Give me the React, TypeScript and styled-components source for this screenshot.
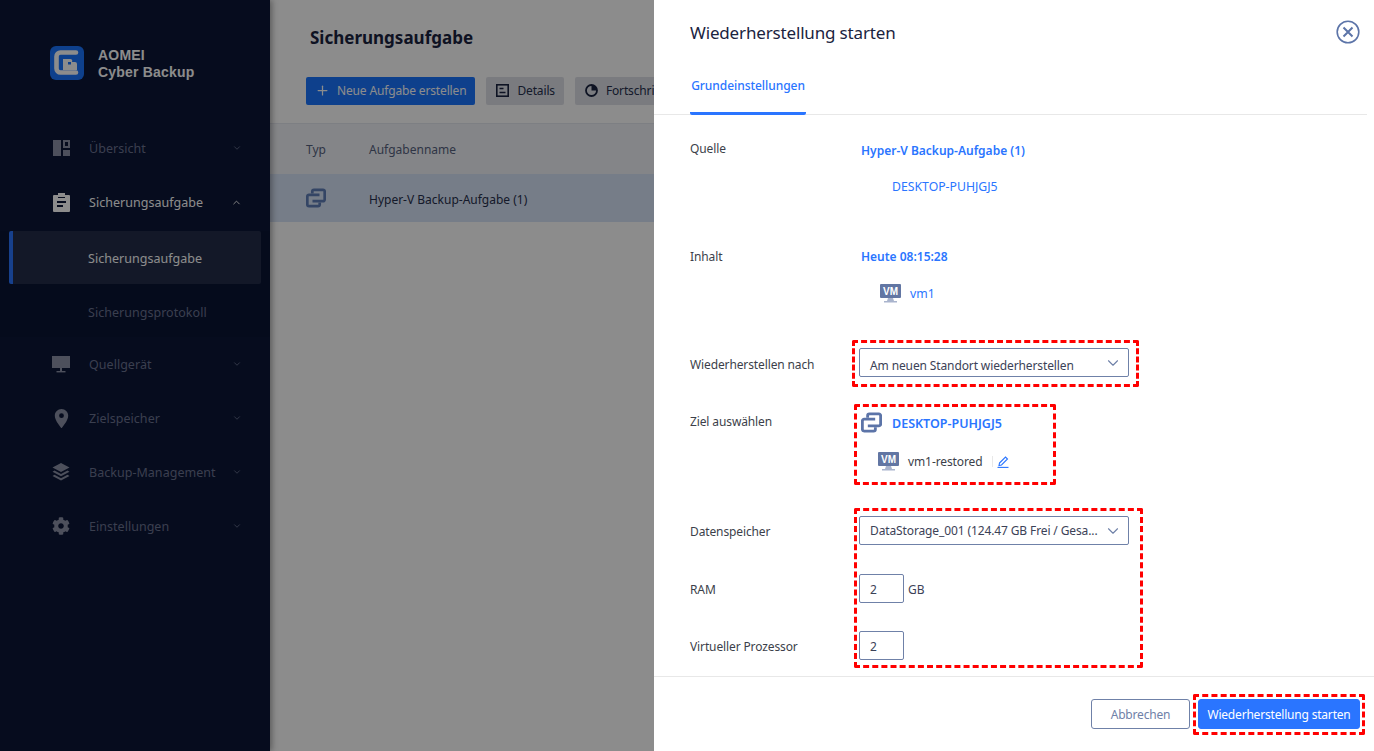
import React from 'react'
import styled, { createGlobalStyle } from 'styled-components'
import { ChevronDown, ChevronUp, Plus } from 'lucide-react'
import { FaCog } from 'react-icons/fa'
import { MdLocationOn } from 'react-icons/md'

const GlobalStyle = createGlobalStyle`
  html, body {
    margin: 0;
    height: 100%;
    overflow: hidden;
    background: #fff;
  }
  * {
    box-sizing: border-box;
  }
  body {
    font-family: "Noto Sans", sans-serif;
  }
`

const Page = styled.div`
  position: relative;
  display: flex;
  width: 1374px;
  height: 751px;
  overflow: hidden;
`

const Sidebar = styled.aside`
  width: 270px;
  flex-shrink: 0;
  background: #0b1637;
  box-shadow: 2px 0 6px rgba(0, 0, 0, 0.35);
  padding-top: 46px;
  position: relative;
`

const Brand = styled.div`
  display: flex;
  align-items: center;
  gap: 14px;
  height: 34px;
  margin: 0 0 41px 50px;
`

const BrandText = styled.div`
  padding-top: 2px;
  font-family: "Liberation Sans", sans-serif;
  font-weight: 700;
  font-size: 14px;
  line-height: 17px;
  letter-spacing: 0.2px;
  color: #fff;
`

const NavItem = styled.div<{ $open?: boolean }>`
  display: flex;
  align-items: center;
  height: 54px;
  padding: 0 28px 0 51px;
  font-size: 12.5px;
  letter-spacing: 0.03px;
  color: ${(p) => (p.$open ? '#ffffff' : '#6b7391')};
  svg {
    flex-shrink: 0;
  }
`

const NavIcon = styled.span<{ $open?: boolean }>`
  width: 20px;
  height: 20px;
  margin-right: 18px;
  display: flex;
  align-items: center;
  justify-content: center;
  color: ${(p) => (p.$open ? '#ffffff' : '#8d93a8')};
`

const NavLabel = styled.span`
  flex: 1;
`

const SubMenu = styled.div`
  display: flex;
  flex-direction: column;
  gap: 1px;
  height: 106px;
  margin-top: 2px;
  background: #0a1434;
`

const SubItem = styled.div<{ $active?: boolean }>`
  display: flex;
  align-items: center;
  flex-shrink: 0;
  height: 53px;
  margin: 0 9px;
  padding-top: 2px;
  font-size: 12.5px;
  letter-spacing: 0.03px;
  border-radius: 2px;
  color: ${(p) => (p.$active ? '#ffffff' : '#6b7391')};
  background: ${(p) => (p.$active ? '#232d4a' : 'transparent')};
  border-left: ${(p) => (p.$active ? '4px solid #2a75ff' : '0')};
  padding-left: ${(p) => (p.$active ? '75px' : '79px')};
`

const Main = styled.main`
  flex: 1;
  min-width: 0;
  background: #ffffff;
  padding-top: 26px;
`

const PageTitle = styled.h1`
  margin: 0 0 27px 40px;
  font-size: 17px;
  line-height: 24px;
  font-weight: 700;
  color: #1a2340;
`

const Toolbar = styled.div`
  display: flex;
  gap: 11px;
  padding-left: 36px;
  margin-bottom: 18px;
`

const ToolButton = styled.div<{ $primary?: boolean }>`
  display: flex;
  align-items: center;
  gap: ${(p) => (p.$primary ? '7px' : '8px')};
  height: 28px;
  padding: 0 9px 2px ${(p) => (p.$primary ? '9px' : '10px')};
  border-radius: 2px;
  white-space: nowrap;
  font-size: 12px;
  letter-spacing: -0.15px;
  color: ${(p) => (p.$primary ? '#ffffff' : '#27304d')};
  background: ${(p) => (p.$primary ? '#1a76ff' : '#dee1e8')};
`

const TableHead = styled.div`
  display: flex;
  align-items: center;
  height: 51px;
  padding-left: 36px;
  background: #f1f3f7;
  border-top: 1px solid #e4e7ee;
  font-size: 12px;
  color: #56627f;
`

const TableRow = styled.div`
  display: flex;
  align-items: center;
  height: 48px;
  padding-left: 36px;
  background: #d7e3f7;
  font-size: 12px;
  color: #27304d;
`

const TypeCell = styled.div`
  width: 63px;
  display: flex;
  align-items: center;
`

const NameCell = styled.div`
  padding-top: 2px;
`

const Backdrop = styled.div`
  position: absolute;
  inset: 0;
  background: rgba(0, 0, 0, 0.45);
`

const Drawer = styled.section`
  position: absolute;
  top: 0;
  right: 0;
  bottom: 0;
  width: 720px;
  background: #ffffff;
  display: flex;
  flex-direction: column;
`

const DrawerHeader = styled.header`
  display: flex;
  align-items: center;
  justify-content: space-between;
  height: 66px;
  padding: 0 14px 2px 36px;
  font-size: 17px;
  letter-spacing: -0.16px;
  color: #1a2340;
`

const Tabs = styled.div`
  height: 49px;
  margin-right: 7px;
  padding-left: 36px;
  border-bottom: 1px solid #e8e8e8;
`

const Tab = styled.div`
  display: inline-flex;
  justify-content: center;
  align-items: center;
  width: 116px;
  height: 49px;
  padding-bottom: 8px;
  font-size: 12px;
  letter-spacing: -0.05px;
  font-weight: 500;
  color: #2a75ff;
  border-bottom: 3px solid #2a75ff;
  border-radius: 0 0 2px 2px;
`

const DrawerBody = styled.div`
  flex: 1;
  min-height: 0;
  overflow: hidden;
  padding: 24px 0 0 36px;
`

const Row = styled.div<{ $gap: number }>`
  display: grid;
  grid-template-columns: 169px 1fr;
  margin-bottom: ${(p) => p.$gap}px;
`

const Label = styled.div<{ $line?: number }>`
  font-size: 12px;
  letter-spacing: -0.12px;
  line-height: ${(p) => p.$line ?? 20}px;
  color: #3c3f4a;
`

const Values = styled.div<{ $top: number }>`
  padding: ${(p) => p.$top}px 0 0 2px;
`

const SourceLink = styled.div`
  font-size: 12px;
  line-height: 20px;
  font-weight: 600;
  color: #2a75ff;
`

const TargetName = styled(SourceLink)`
  padding-top: 3px;
  font-size: 12.5px;
`

const SubLink = styled.div<{ $indent: number; $top: number }>`
  display: flex;
  align-items: center;
  gap: 9px;
  height: 20px;
  margin: ${(p) => p.$top}px 0 0 ${(p) => p.$indent}px;
  font-size: 12.25px;
  color: #2a75ff;
`

const TargetHead = styled.div`
  display: flex;
  align-items: center;
  gap: 10px;
  height: 20px;
`

const VmRow = styled.div`
  display: flex;
  align-items: center;
  height: 20px;
  gap: 9px;
  margin: 19px 0 0 17px;
  font-size: 12px;
  letter-spacing: -0.1px;
  color: #3c3f4a;
`

const EditMark = styled.span`
  display: flex;
  align-items: center;
  padding-left: 4px;
  border-left: 1px solid #e8e8e8;
  height: 11px;
`

const Select = styled.div`
  display: flex;
  align-items: center;
  justify-content: space-between;
  width: 270px;
  height: 29px;
  padding: 0 6px 0 10px;
  border: 1px solid #6f81a8;
  border-radius: 2px;
  font-size: 12px;
  letter-spacing: -0.12px;
  color: #3c4257;
  white-space: nowrap;
  svg {
    flex-shrink: 0;
  }
`

const SelectText = styled.span<{ $drop: number }>`
  padding-top: ${(p) => p.$drop}px;
`

const NumberRow = styled.div`
  display: flex;
  align-items: center;
  align-self: start;
  gap: 4px;
  font-size: 12px;
  color: #3c4257;
`

const NumberBox = styled.div`
  width: 45px;
  height: 29px;
  padding: 2px 0 0 10px;
  display: flex;
  align-items: center;
  border: 1px solid #6f81a8;
  border-radius: 2px;
  font-size: 12px;
  color: #3c4257;
`

const Unit = styled.span`
  padding-top: 2px;
`

const DrawerFooter = styled.footer`
  display: flex;
  justify-content: flex-end;
  gap: 8px;
  height: 75px;
  padding: 22px 14px 0 0;
  border-top: 1px solid #e8e8e8;
`

const FooterButton = styled.div<{ $primary?: boolean }>`
  display: flex;
  align-items: center;
  justify-content: center;
  height: 30px;
  width: ${(p) => (p.$primary ? '162px' : '99px')};
  padding-top: 1px;
  border-radius: 3px;
  font-size: 12px;
  letter-spacing: -0.19px;
  color: ${(p) => (p.$primary ? '#ffffff' : '#6f81a8')};
  background: ${(p) => (p.$primary ? '#2a75ff' : '#ffffff')};
  border: 1px solid ${(p) => (p.$primary ? '#2a75ff' : '#6f81a8')};
`

const Marker = styled.div<{ $x: number; $y: number; $w: number; $h: number }>`
  position: absolute;
  left: ${(p) => p.$x}px;
  top: ${(p) => p.$y}px;
  width: ${(p) => p.$w}px;
  height: ${(p) => p.$h}px;
  border: 3px dashed #ff0000;
  border-radius: 2px;
  pointer-events: none;
`

function BrandLogo () {
  return (
    <svg width='34' height='34' viewBox='0 0 34 34'>
      <rect width='34' height='34' rx='6' fill='#1a76ff' />
      <path d='M26 6.500H10.500a4 4 0 0 0-4 4v12a4 4 0 0 0 4 4H26' fill='none' stroke='#fff' strokeWidth='4.600' strokeLinecap='round' />
      <path d='M13 13h7a2 2 0 0 1 2 3h3a2 2 0 0 1 2 2v6H13z' fill='#fff' />
      <path d='M18 16h3v2.500h-3z' fill='#1a76ff' />
    </svg>
  )
}

function OverviewIcon () {
  return (
    <svg width='17' height='17' viewBox='0 0 17 17' fill='currentColor'>
      <rect x='0' y='0' width='8' height='16' />
      <path fillRule='evenodd' d='M10 0h7v8h-7zM12 2v4h3V2z' />
      <rect x='10' y='10' width='7' height='6' />
    </svg>
  )
}

function ClipboardIcon () {
  return (
    <svg width='17' height='19' viewBox='0 0 17 19' fill='currentColor'>
      <path
        fillRule='evenodd'
        d='M1 2h4V0h7v2h4a1 1 0 0 1 1 1v15a1 1 0 0 1-1 1H1a1 1 0 0 1-1-1V3a1 1 0 0 1 1-1zM4 8v2h9V8zM4 12v2h6v-2zM5 4v1h7V4z'
      />
    </svg>
  )
}

function MonitorIcon () {
  return (
    <svg width='18' height='17' viewBox='0 0 18 17' fill='currentColor'>
      <rect x='0' y='0' width='18' height='12' />
      <rect x='8' y='12' width='2' height='3' />
      <rect x='4.500' y='15' width='9' height='1.400' />
    </svg>
  )
}

function LayersIcon () {
  return (
    <svg width='18' height='18' viewBox='0 0 18 18' fill='currentColor'>
      <path d='M9 0l8.500 4.500L9 9 .5 4.500z' />
      <path d='M2.500 7.500L.5 8.700 9 13.200l8.500-4.500-2-1.200L9 11z' />
      <path d='M2.500 11.700L.5 12.900 9 17.400l8.500-4.500-2-1.200L9 15.200z' />
    </svg>
  )
}

function SyncIcon ({ size, color }: { size: number; color: string }) {
  return (
    <svg width={size} height={size} viewBox='0 0 20 19' fill='none' stroke={color} strokeWidth='2.700'>
      <path d='M6.300 5V3a1.700 1.700 0 0 1 1.700-1.700h9A1.700 1.700 0 0 1 18.700 3v8a1.700 1.700 0 0 1-1.700 1.700H6.500' />
      <path d='M13.700 14v2a1.700 1.700 0 0 1-1.700 1.700H3A1.700 1.700 0 0 1 1.300 16V8A1.700 1.700 0 0 1 3 6.300h10.500' />
    </svg>
  )
}

function VmIcon () {
  return (
    <svg width='21' height='19' viewBox='0 0 21 19'>
      <rect x='0' y='0' width='21' height='14' rx='1' fill='#6276a3' />
      <text x='10.500' y='11' textAnchor='middle' fontSize='10' fontWeight='700' fontFamily='"Liberation Sans", sans-serif' fill='#fff'>VM</text>
      <path d='M8 14h5l1 3H7z' fill='#a9b4cd' />
      <rect x='4' y='17' width='13' height='1.500' fill='#a9b4cd' />
    </svg>
  )
}

function CloseIcon () {
  return (
    <svg width='24' height='24' viewBox='0 0 24 24' fill='none' stroke='#5c74a8'>
      <circle cx='12' cy='12' r='10.800' strokeWidth='1.600' />
      <path d='M7.500 7.500l9 9M16.500 7.500l-9 9' strokeWidth='2' />
    </svg>
  )
}

function PenIcon () {
  return (
    <svg width='12' height='13' viewBox='0 0 12 13' fill='none' stroke='#2a75ff' strokeWidth='1.100'>
      <path d='M2.500 8L8.500 2l2 2-6 6-2.500.5z' />
      <path d='M.5 12.400h11' />
    </svg>
  )
}

function DetailsIcon () {
  return (
    <svg width='13' height='13' viewBox='0 0 13 13' fill='none' stroke='#1a2340' strokeWidth='1.600'>
      <rect x='.8' y='.8' width='11.400' height='11.400' />
      <path d='M3.500 4.500h4M3.500 8.500h6' />
    </svg>
  )
}

function ProgressIcon () {
  return (
    <svg width='13' height='13' viewBox='0 0 13 13'>
      <circle cx='6.500' cy='6.500' r='5.500' fill='none' stroke='#1a2340' strokeWidth='1.800' />
      <path d='M6.500 6.500V1a5.500 5.500 0 0 1 5.500 5.500z' fill='#1a2340' />
    </svg>
  )
}

const navBefore = [{ label: 'Übersicht', icon: <OverviewIcon /> }]

const navAfter = [
  { label: 'Quellgerät', icon: <MonitorIcon /> },
  { label: 'Zielspeicher', icon: <MdLocationOn size={23} /> },
  { label: 'Backup-Management', icon: <LayersIcon /> },
  { label: 'Einstellungen', icon: <FaCog size={18} /> },
]

const markers = [
  { x: 852, y: 340, w: 287, h: 47 },
  { x: 854, y: 404, w: 202, h: 81 },
  { x: 854, y: 508, w: 289, h: 160 },
  { x: 1193, y: 694, w: 172, h: 41 },
]

export default function App () {
  return (
    <Page>
      <GlobalStyle />
      <Sidebar>
        <Brand>
          <BrandLogo />
          <BrandText>AOMEI<br />Cyber Backup</BrandText>
        </Brand>
        {navBefore.map((item) => (
          <NavItem key={item.label}>
            <NavIcon>{item.icon}</NavIcon>
            <NavLabel>{item.label}</NavLabel>
            <ChevronDown size={10} />
          </NavItem>
        ))}
        <NavItem $open>
          <NavIcon $open><ClipboardIcon /></NavIcon>
          <NavLabel>Sicherungsaufgabe</NavLabel>
          <ChevronUp size={11} />
        </NavItem>
        <SubMenu>
          <SubItem $active>Sicherungsaufgabe</SubItem>
          <SubItem>Sicherungsprotokoll</SubItem>
        </SubMenu>
        {navAfter.map((item) => (
          <NavItem key={item.label}>
            <NavIcon>{item.icon}</NavIcon>
            <NavLabel>{item.label}</NavLabel>
            <ChevronDown size={10} />
          </NavItem>
        ))}
      </Sidebar>

      <Main>
        <PageTitle>Sicherungsaufgabe</PageTitle>
        <Toolbar>
          <ToolButton $primary><Plus size={15} />Neue Aufgabe erstellen</ToolButton>
          <ToolButton><DetailsIcon />Details</ToolButton>
          <ToolButton><ProgressIcon />Fortschritt</ToolButton>
        </Toolbar>
        <TableHead>
          <TypeCell>Typ</TypeCell>
          <div>Aufgabenname</div>
        </TableHead>
        <TableRow>
          <TypeCell><SyncIcon size={20} color='#5f7fb8' /></TypeCell>
          <NameCell>Hyper-V Backup-Aufgabe (1)</NameCell>
        </TableRow>
      </Main>

      <Backdrop />

      <Drawer>
        <DrawerHeader>
          Wiederherstellung starten
          <CloseIcon />
        </DrawerHeader>
        <Tabs><Tab>Grundeinstellungen</Tab></Tabs>
        <DrawerBody>
          <Row $gap={50}>
            <Label>Quelle</Label>
            <Values $top={2}>
              <SourceLink>Hyper-V Backup-Aufgabe (1)</SourceLink>
              <SubLink $indent={31} $top={15}>DESKTOP-PUHJGJ5</SubLink>
            </Values>
          </Row>
          <Row $gap={45}>
            <Label $line={22}>Inhalt</Label>
            <Values $top={1}>
              <SourceLink>Heute 08:15:28</SourceLink>
              <SubLink $indent={19} $top={16}><VmIcon />vm1</SubLink>
            </Values>
          </Row>
          <Row $gap={30}>
            <Label $line={33}>Wiederherstellen nach</Label>
            <Select>
              <SelectText $drop={6}>Am neuen Standort wiederherstellen</SelectText>
              <ChevronDown size={18} strokeWidth={1.5} color='#6f81a8' />
            </Select>
          </Row>
          <Row $gap={45}>
            <Label $line={22}>Ziel auswählen</Label>
            <Values $top={1}>
              <TargetHead>
                <SyncIcon size={21} color='#5c74a8' />
                <TargetName>DESKTOP-PUHJGJ5</TargetName>
              </TargetHead>
              <VmRow>
                <VmIcon />
                vm1-restored
                <EditMark><PenIcon /></EditMark>
              </VmRow>
            </Values>
          </Row>
          <Row $gap={27}>
            <Label $line={31}>Datenspeicher</Label>
            <Select>
              <SelectText $drop={0}>DataStorage_001 (124.47 GB Frei / Gesa...</SelectText>
              <ChevronDown size={18} strokeWidth={1.5} color='#6f81a8' />
            </Select>
          </Row>
          <Row $gap={26}>
            <Label $line={31}>RAM</Label>
            <NumberRow>
              <NumberBox>2</NumberBox>
              <Unit>GB</Unit>
            </NumberRow>
          </Row>
          <Row $gap={0}>
            <Label $line={31}>Virtueller Prozessor</Label>
            <NumberRow>
              <NumberBox>2</NumberBox>
            </NumberRow>
          </Row>
        </DrawerBody>
        <DrawerFooter>
          <FooterButton>Abbrechen</FooterButton>
          <FooterButton $primary>Wiederherstellung starten</FooterButton>
        </DrawerFooter>
      </Drawer>

      {markers.map((m) => (
        <Marker key={m.x} $x={m.x} $y={m.y} $w={m.w} $h={m.h} />
      ))}
    </Page>
  )
}
